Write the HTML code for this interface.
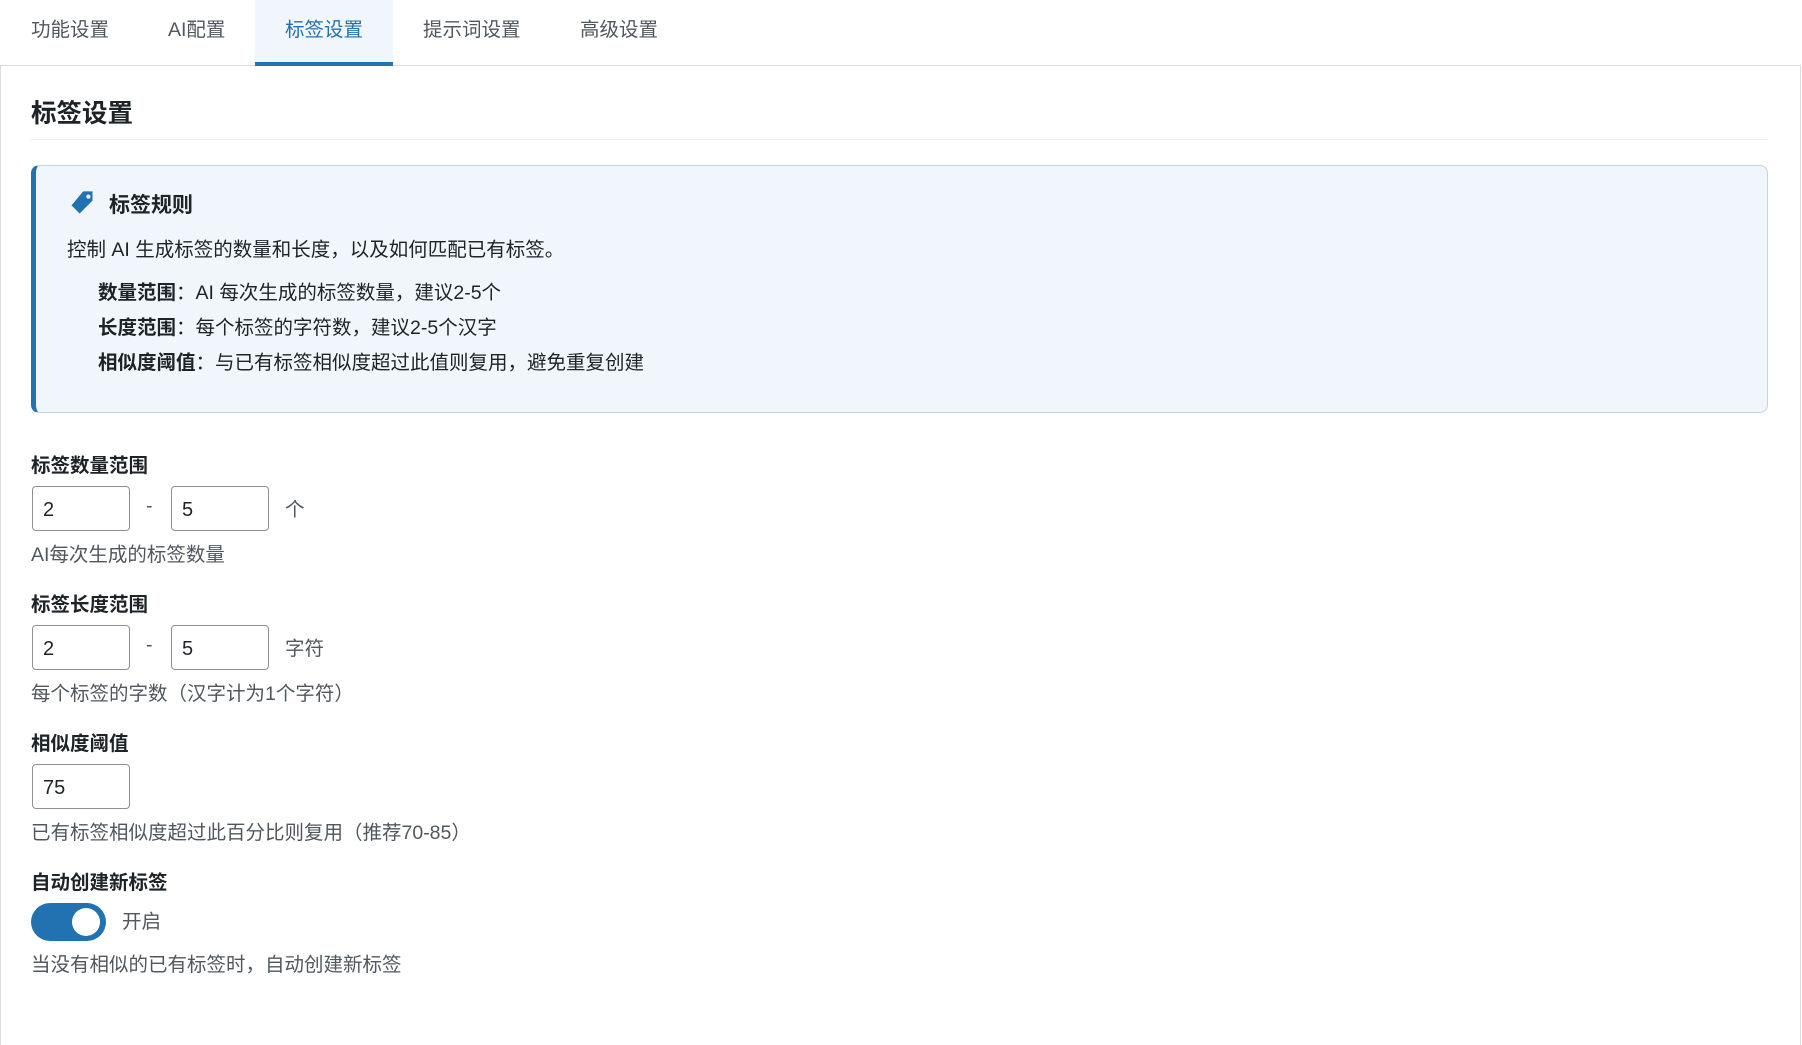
<!DOCTYPE html>
<html><head><meta charset="utf-8"><style>
*{margin:0;padding:0;box-sizing:border-box}
body{width:1802px;height:1031px;background:#fff;font-family:"Liberation Sans","Noto Sans CJK SC",sans-serif;color:#1d2327;position:relative;overflow:hidden}
.a{position:absolute;white-space:nowrap}
.tab{position:absolute;top:0;height:66px;line-height:60px;font-size:19.5px;color:#50575e}
.panel{position:absolute;left:0;top:65px;width:1801px;height:980px;border:1px solid #dcdcde;border-bottom:none}
.info{position:absolute;left:31px;top:165px;width:1737px;height:248px;background:#f0f6fc;border:1px solid #c3d4e6;border-left:5px solid #2271b1;border-radius:8px}
.lbl{font-size:19.5px;font-weight:bold}
.help{font-size:19.5px;color:#50575e}
.inp{position:absolute;width:98px;height:45px;border:1px solid #8c8f94;border-radius:4px;font-size:20px;padding-left:10px;line-height:46px;background:#fff}
.t{font-size:19.5px}
</style></head><body>
<div class="panel"></div>
<div class="a" style="left:255px;top:0;width:138px;height:66px;background:#f0f6fc;border-bottom:4px solid #2271b1"></div>
<div class="tab" style="left:31px">功能设置</div>
<div class="tab" style="left:168px">AI配置</div>
<div class="tab" style="left:285px;color:#2271b1">标签设置</div>
<div class="tab" style="left:423px">提示词设置</div>
<div class="tab" style="left:580px">高级设置</div>
<div class="a" style="left:31px;top:93px;font-size:25.5px;font-weight:bold">标签设置</div>
<div class="a" style="left:31px;top:139px;width:1737px;height:1px;background:#e5e7e9"></div>
<div class="info"></div>
<svg class="a" style="left:68px;top:189px" width="28" height="28" viewBox="0 0 24 24"><path d="M13 2h8v8L10 21 3 14z" fill="#2271b1"/><circle cx="17.5" cy="6.5" r="1.8" fill="#f0f6fc"/></svg>
<div class="a" style="left:109px;top:189px;font-size:21px;font-weight:bold">标签规则</div>
<div class="a t" style="left:67px;top:233px">控制 AI 生成标签的数量和长度，以及如何匹配已有标签。</div>
<div class="a t" style="left:98px;top:276px"><b>数量范围</b>：AI 每次生成的标签数量，建议2-5个</div>
<div class="a t" style="left:98px;top:311px"><b>长度范围</b>：每个标签的字符数，建议2-5个汉字</div>
<div class="a t" style="left:98px;top:346px"><b>相似度阈值</b>：与已有标签相似度超过此值则复用，避免重复创建</div>

<div class="a lbl" style="left:31px;top:449px">标签数量范围</div>
<div class="inp" style="left:32px;top:486px">2</div>
<div class="a help" style="left:146px;top:495px">-</div>
<div class="inp" style="left:171px;top:486px">5</div>
<div class="a t" style="left:285px;top:493px;color:#50575e">个</div>
<div class="a help" style="left:31px;top:538px">AI每次生成的标签数量</div>

<div class="a lbl" style="left:31px;top:588px">标签长度范围</div>
<div class="inp" style="left:32px;top:625px">2</div>
<div class="a help" style="left:146px;top:634px">-</div>
<div class="inp" style="left:171px;top:625px">5</div>
<div class="a t" style="left:285px;top:632px;color:#50575e">字符</div>
<div class="a help" style="left:31px;top:677px">每个标签的字数（汉字计为1个字符）</div>

<div class="a lbl" style="left:31px;top:727px">相似度阈值</div>
<div class="inp" style="left:32px;top:764px">75</div>
<div class="a help" style="left:31px;top:816px">已有标签相似度超过此百分比则复用（推荐70-85）</div>

<div class="a lbl" style="left:31px;top:866px">自动创建新标签</div>
<div class="a" style="left:31px;top:903px;width:75px;height:38px;border-radius:19px;background:#2271b1"></div>
<div class="a" style="left:72px;top:908px;width:28px;height:28px;border-radius:50%;background:#fff"></div>
<div class="a t" style="left:122px;top:905px;color:#50575e">开启</div>
<div class="a help" style="left:31px;top:948px">当没有相似的已有标签时，自动创建新标签</div>
</body></html>
